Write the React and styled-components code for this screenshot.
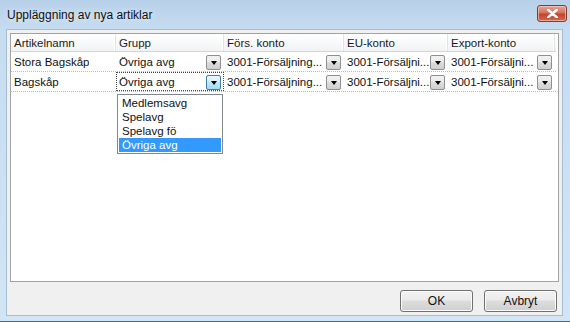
import React from 'react';
import styled, { createGlobalStyle } from 'styled-components';

const GlobalStyle = createGlobalStyle`
  html, body {
    margin: 0;
    padding: 0;
    width: 570px;
    height: 322px;
    overflow: hidden;
    background: #ffffff;
  }
  * { box-sizing: border-box; }
`;

const Window = styled.div`
  width: 570px;
  height: 322px;
  display: flex;
  flex-direction: column;
  padding: 0 7px 5px 6px;
  background: linear-gradient(180deg, #b7d0e9 0%, #c6dcf0 30px, #d3e5f5 100%);
  border-bottom: 1px solid #3d6f86;
  font-family: "Liberation Sans", Arial, sans-serif;
  font-size: 11.5px;
  color: #000;
`;

const TitleBar = styled.div`
  height: 29px;
  flex: none;
  display: flex;
  align-items: flex-start;
  justify-content: space-between;
`;

const Title = styled.div`
  padding: 8px 0 0 1px;
  font-size: 12px;
  color: #101010;
  text-shadow: 0 0 6px rgba(255, 255, 255, 0.9);
`;

const CloseButton = styled.div`
  width: 30px;
  height: 17px;
  margin-top: 5px;
  margin-right: -4px;
  border: 1px solid #8a3a2c;
  border-radius: 3px;
  background: linear-gradient(180deg, #e8a595 0%, #d4735f 45%, #c0462d 55%, #d06a50 100%);
  box-shadow: inset 0 0 0 1px rgba(255, 210, 200, 0.6);
  display: flex;
  align-items: center;
  justify-content: center;
`;

const Client = styled.div`
  flex: 1;
  display: flex;
  flex-direction: column;
  background: #f0f0f0;
  border: 1px solid #a6bed4;
  padding: 3px 3px 0 3px;
`;

const Panel = styled.div`
  height: 249px;
  flex: none;
  background: #ffffff;
  border: 1px solid #a3a3a3;
  position: relative;
`;

const Row = styled.div`
  display: grid;
  grid-template-columns: 105px 108px 120px 104px 107px;
  height: ${p => (p.$header ? '18px' : '20px')};
  border-bottom: ${p => (p.$header ? '1px solid #d5d5d5' : '1px dotted #bdbdbd')};
  background: ${p => (p.$header ? 'linear-gradient(180deg, #ffffff 0%, #f7f8f9 60%, #f1f2f4 100%)' : '#ffffff')};
  margin-right: 2px;
`;

const HeadCell = styled.div`
  display: flex;
  align-items: center;
  padding: 1px 0 0 3px;
  color: #1a1a1a;
  border-right: 1px solid #e2e3e4;
  box-shadow: inset -1px 0 0 #ffffff;
`;

const Cell = styled.div`
  display: flex;
  align-items: center;
  justify-content: space-between;
  padding: 1px 3px 0 3px;
  white-space: nowrap;
  outline: ${p => (p.$focus ? '1px dotted #444' : 'none')};
  outline-offset: -1px;
`;

const CellText = styled.span`
  overflow: hidden;
  text-overflow: ellipsis;
  color: #111;
`;

const DropButton = styled.div`
  width: 15px;
  height: 15px;
  flex: none;
  border: 1px solid ${p => (p.$hot ? '#3c7fb1' : '#8e8f8f')};
  border-radius: 2px;
  background: ${p =>
    p.$hot
      ? 'linear-gradient(180deg, #eaf6fd 0%, #d9f0fc 45%, #bee6fd 50%, #a7d9f5 100%)'
      : 'linear-gradient(180deg, #f2f2f2 0%, #ebebeb 45%, #dddddd 50%, #cfcfcf 100%)'};
  display: flex;
  align-items: center;
  justify-content: center;
  &::after {
    content: '';
    border-left: 3.5px solid transparent;
    border-right: 3.5px solid transparent;
    border-top: 4px solid #000;
    margin-top: 1px;
  }
`;

const DropList = styled.div`
  position: absolute;
  left: 106px;
  top: 60px;
  width: 106px;
  background: #ffffff;
  border: 1px solid #828790;
  padding: 1px;
`;

const ListItem = styled.div`
  height: 14px;
  line-height: 14px;
  padding-left: 3px;
  background: ${p => (p.$selected ? '#3399ff' : 'transparent')};
  color: ${p => (p.$selected ? '#ffffff' : '#111111')};
`;

const Footer = styled.div`
  flex: 1;
  display: flex;
  justify-content: flex-end;
  align-items: flex-start;
  gap: 11px;
  padding: 8px 2px 0 0;
`;

const Button = styled.div`
  width: 73px;
  height: 22px;
  border: 1px solid #707070;
  border-radius: 3px;
  background: linear-gradient(180deg, #f2f2f2 0%, #ebebeb 45%, #dddddd 50%, #cfcfcf 100%);
  box-shadow: inset 0 0 0 1px #fcfcfc;
  display: flex;
  align-items: center;
  justify-content: center;
  font-size: 12px;
  color: #111;
`;

const CloseIcon = () => (
  <svg width="11" height="9" viewBox="0 0 11 9">
    <path d="M1 0.5 L10 8.5 M10 0.5 L1 8.5" stroke="#ffffff" strokeWidth="2.4" strokeLinecap="round" />
  </svg>
);

const columns = ['Artikelnamn', 'Grupp', 'Förs. konto', 'EU-konto', 'Export-konto'];

const rows = [
  { name: 'Stora Bagskåp', group: 'Övriga avg', fors: '3001-Försäljning...', eu: '3001-Försäljni...', exp: '3001-Försäljni...' },
  { name: 'Bagskåp', group: 'Övriga avg', fors: '3001-Försäljning...', eu: '3001-Försäljni...', exp: '3001-Försäljni...', active: true },
];

const groups = ['Medlemsavg', 'Spelavg', 'Spelavg fö', 'Övriga avg'];

export default function App() {
  return (
    <>
      <GlobalStyle />
      <Window>
        <TitleBar>
          <Title>Uppläggning av nya artiklar</Title>
          <CloseButton>
            <CloseIcon />
          </CloseButton>
        </TitleBar>
        <Client>
          <Panel>
            <Row $header>
              {columns.map(c => (
                <HeadCell key={c}>{c}</HeadCell>
              ))}
            </Row>
            {rows.map((r, i) => (
              <Row key={i}>
                <Cell>
                  <CellText>{r.name}</CellText>
                </Cell>
                <Cell $focus={r.active}>
                  <CellText>{r.group}</CellText>
                  <DropButton $hot={r.active} />
                </Cell>
                <Cell>
                  <CellText>{r.fors}</CellText>
                  <DropButton />
                </Cell>
                <Cell>
                  <CellText>{r.eu}</CellText>
                  <DropButton />
                </Cell>
                <Cell>
                  <CellText>{r.exp}</CellText>
                  <DropButton />
                </Cell>
              </Row>
            ))}
            <DropList>
              {groups.map(g => (
                <ListItem key={g} $selected={g === 'Övriga avg'}>
                  {g}
                </ListItem>
              ))}
            </DropList>
          </Panel>
          <Footer>
            <Button>OK</Button>
            <Button>Avbryt</Button>
          </Footer>
        </Client>
      </Window>
    </>
  );
}
